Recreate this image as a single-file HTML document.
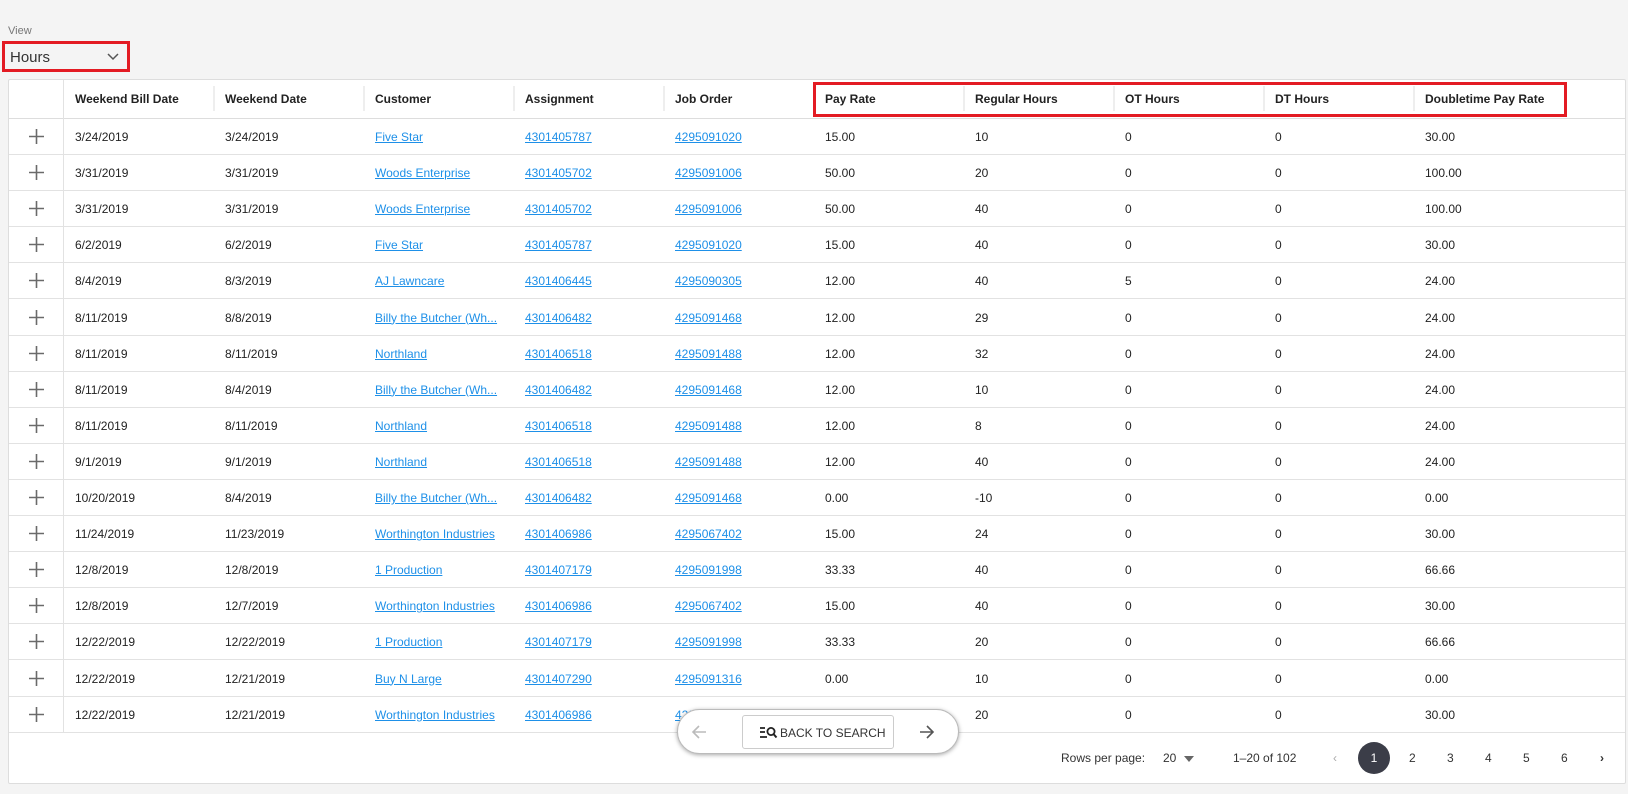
<!DOCTYPE html>
<html><head><meta charset="utf-8"><style>
*{box-sizing:border-box;margin:0;padding:0}
body{width:1628px;height:794px;background:#f4f4f4;font-family:"Liberation Sans",sans-serif;position:relative;overflow:hidden;color:#222}
.lbl{position:absolute;left:8px;top:25px;font-size:11px;color:#777}
.sel{position:absolute;left:2px;top:41px;width:128px;height:31px;border:3px solid #e31b23;font-size:15px;padding:5px 0 0 5px;color:#333}
.sel svg{position:absolute;right:8px;top:9px}
.tbl{position:absolute;left:8px;top:79px;width:1618px;height:705px;background:#fff;border:1px solid #ddd;border-radius:2px}
.hdr{position:absolute;left:0;top:0;right:0;height:39px;border-bottom:1px solid #ddd}
.h{position:absolute;top:12px;font-size:12px;font-weight:bold;color:#222}
.hs{position:absolute;top:6px;width:2px;height:25px;background:#eee}
.row{position:absolute;left:0;right:0;height:36px;border-bottom:1px solid #e2e2e2;font-size:12px}
.row span{position:absolute;top:11px}
.row a{color:#1e90e8;text-decoration:underline}
.plus{position:absolute;left:20px;top:10px}
.vsep{position:absolute;left:54px;top:0;width:1px;height:652px;background:#e2e2e2}
.red{position:absolute;left:813px;top:82px;width:754px;height:35px;border:3px solid #e31b23}
.pill{position:absolute;left:677px;top:709px;width:282px;height:45px;border-radius:23px;background:#fff;border:1px solid #bbb;box-shadow:0 1px 4px rgba(0,0,0,.35)}
.btn{position:absolute;left:64px;top:5px;width:152px;height:34px;border:1px solid #ccc;border-radius:3px;font-size:12px;padding:10px 0 0 37px;color:#333}
.pg{position:absolute;top:751px;font-size:12px;color:#333}
.cur{position:absolute;left:1358px;top:742px;width:32px;height:32px;border-radius:16px;background:#3b3d48;color:#fff;font-size:12px;text-align:center;line-height:32px}
</style></head><body>
<div class="lbl">View</div>
<div class="sel">Hours<svg width="12" height="8" viewBox="0 0 12 8"><path d="M1 1l5 5 5-5" stroke="#555" stroke-width="1.5" fill="none"/></svg></div>
<div class="tbl">
<div class="hdr">
<div class="hs" style="left:54px;width:1px;top:0;height:39px;background:#e2e2e2"></div>
<span class="h" style="left:66px">Weekend Bill Date</span>
<div class="hs" style="left:204px"></div><span class="h" style="left:216px">Weekend Date</span>
<div class="hs" style="left:354px"></div><span class="h" style="left:366px">Customer</span>
<div class="hs" style="left:504px"></div><span class="h" style="left:516px">Assignment</span>
<div class="hs" style="left:654px"></div><span class="h" style="left:666px">Job Order</span>
<span class="h" style="left:816px">Pay Rate</span>
<div class="hs" style="left:954px"></div><span class="h" style="left:966px">Regular Hours</span>
<div class="hs" style="left:1104px"></div><span class="h" style="left:1116px">OT Hours</span>
<div class="hs" style="left:1254px"></div><span class="h" style="left:1266px">DT Hours</span>
<div class="hs" style="left:1404px"></div><span class="h" style="left:1416px">Doubletime Pay Rate</span>
</div>
<div class="vsep"></div>
<div id="rows"></div>
</div>
<div class="red"></div>
<div class="pill">
<svg style="position:absolute;left:12px;top:13px" width="18" height="18" viewBox="0 0 18 18"><path d="M16 9H3M9 3L3 9l6 6" stroke="#bbb" stroke-width="1.6" fill="none"/></svg>
<div class="btn"><svg style="position:absolute;left:17px;top:10px" width="18" height="13" viewBox="0 0 18 13"><path d="M0 2h5M0 6h5M0 11h7" stroke="#222" stroke-width="1.8"/><circle cx="11" cy="5.5" r="3.6" stroke="#222" stroke-width="1.8" fill="none"/><path d="M13.5 8l3 3.5" stroke="#222" stroke-width="2"/></svg>BACK TO SEARCH</div>
<svg style="position:absolute;left:240px;top:13px" width="18" height="18" viewBox="0 0 18 18"><path d="M2 9h13M9 3l6 6-6 6" stroke="#555" stroke-width="1.6" fill="none"/></svg>
</div>
<span class="pg" style="left:1061px">Rows per page:</span>
<span class="pg" style="left:1163px">20</span>
<svg style="position:absolute;left:1184px;top:756px" width="10" height="6"><path d="M0 0h10L5 6z" fill="#666"/></svg>
<span class="pg" style="left:1233px">1–20 of 102</span>
<span class="pg" style="left:1333px;color:#aaa">‹</span>
<div class="cur">1</div>
<span class="pg" style="left:1409px">2</span>
<span class="pg" style="left:1447px">3</span>
<span class="pg" style="left:1485px">4</span>
<span class="pg" style="left:1523px">5</span>
<span class="pg" style="left:1561px">6</span>
<span class="pg" style="left:1600px;font-weight:bold">›</span>
<script>
var d=[["3/24/2019","3/24/2019","Five Star","4301405787","4295091020","15.00","10","0","0","30.00"],
["3/31/2019","3/31/2019","Woods Enterprise","4301405702","4295091006","50.00","20","0","0","100.00"],
["3/31/2019","3/31/2019","Woods Enterprise","4301405702","4295091006","50.00","40","0","0","100.00"],
["6/2/2019","6/2/2019","Five Star","4301405787","4295091020","15.00","40","0","0","30.00"],
["8/4/2019","8/3/2019","AJ Lawncare","4301406445","4295090305","12.00","40","5","0","24.00"],
["8/11/2019","8/8/2019","Billy the Butcher (Wh...","4301406482","4295091468","12.00","29","0","0","24.00"],
["8/11/2019","8/11/2019","Northland","4301406518","4295091488","12.00","32","0","0","24.00"],
["8/11/2019","8/4/2019","Billy the Butcher (Wh...","4301406482","4295091468","12.00","10","0","0","24.00"],
["8/11/2019","8/11/2019","Northland","4301406518","4295091488","12.00","8","0","0","24.00"],
["9/1/2019","9/1/2019","Northland","4301406518","4295091488","12.00","40","0","0","24.00"],
["10/20/2019","8/4/2019","Billy the Butcher (Wh...","4301406482","4295091468","0.00","-10","0","0","0.00"],
["11/24/2019","11/23/2019","Worthington Industries","4301406986","4295067402","15.00","24","0","0","30.00"],
["12/8/2019","12/8/2019","1 Production","4301407179","4295091998","33.33","40","0","0","66.66"],
["12/8/2019","12/7/2019","Worthington Industries","4301406986","4295067402","15.00","40","0","0","30.00"],
["12/22/2019","12/22/2019","1 Production","4301407179","4295091998","33.33","20","0","0","66.66"],
["12/22/2019","12/21/2019","Buy N Large","4301407290","4295091316","0.00","10","0","0","0.00"],
["12/22/2019","12/21/2019","Worthington Industries","4301406986","4295067402","","20","0","0","30.00"]];
var h="";d.forEach(function(r,i){h+='<div class="row" style="top:'+(39+i*36.1)+'px"><svg class="plus" width="15" height="15" viewBox="0 0 15 15"><path d="M7.5 0v15M0 7.5h15" stroke="#6a6a6a" stroke-width="1.6"/></svg>';
r.forEach(function(c,j){var x=66+150*j;var t=(j>=2&&j<=4)?'<a>'+c+'</a>':c;h+='<span style="left:'+x+'px">'+t+'</span>';});h+='</div>';});
document.getElementById("rows").innerHTML=h;
</script>
</body></html>
